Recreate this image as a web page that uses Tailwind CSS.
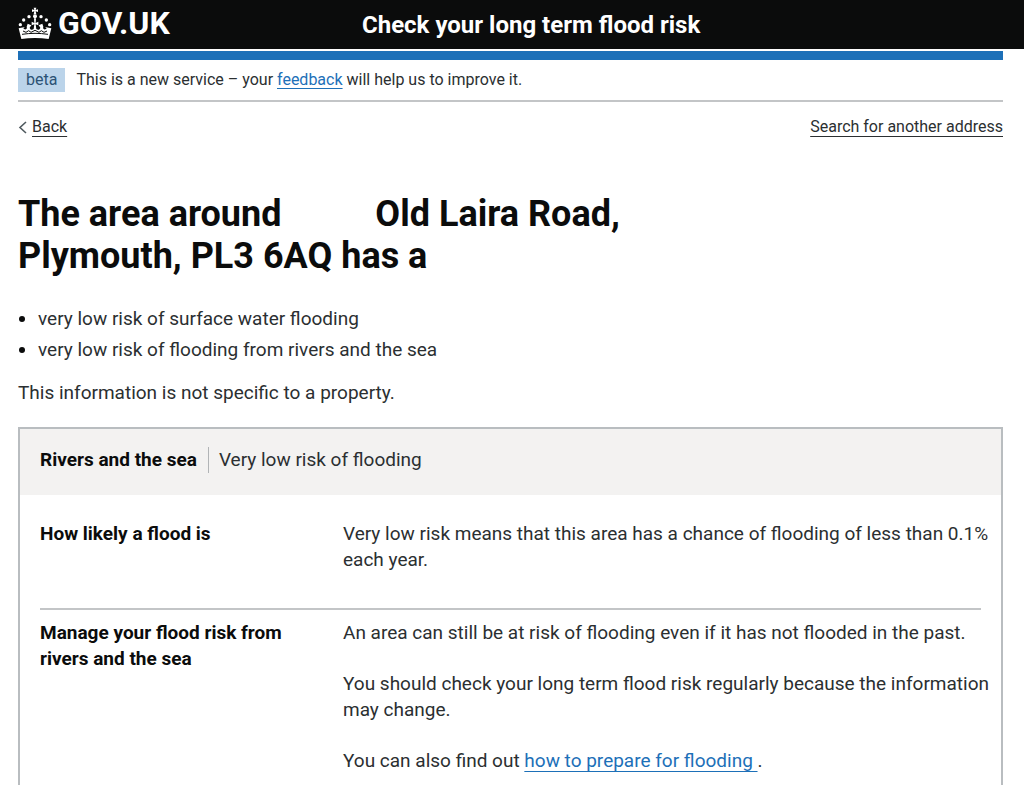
<!DOCTYPE html>
<html lang="en">
<head>
  <meta charset="utf-8">
  <meta name="viewport" content="width=device-width, initial-scale=1">
  <title>Check your long term flood risk - GOV.UK</title>
  <script src="https://cdn.jsdelivr.net/npm/@tailwindcss/browser@4"></script>
</head>
<body class="bg-white font-[Roboto,'Liberation_Sans',sans-serif] text-[19px] leading-[26px] text-[#2b2f31]">
  <header class="bg-[#0b0c0c] text-white h-[49px] px-[18px] flex items-center">
    <div class="w-[344px] shrink-0">
      <a href="#" class="inline-flex items-center gap-[6px] text-[32px] leading-[40px] font-bold" aria-label="GOV.UK">
        <svg class="w-[34px] h-[32px]" viewBox="54 16 102 96" fill="currentColor" aria-hidden="true">
          <path d="M101 18h8l-2 7 7-2v8l-7-2 2 9h-8l2-9-7 2v-8l7 2z"/>
          <circle cx="105" cy="44" r="6"/>
          <circle cx="87" cy="45" r="5"/>
          <circle cx="123" cy="45" r="5"/>
          <circle cx="71" cy="55" r="5"/>
          <circle cx="139" cy="55" r="5"/>
          <circle cx="61" cy="69" r="5"/>
          <circle cx="149" cy="69" r="5"/>
          <path d="M102 50h6l-1 14 8-4v11l-8-3 2 14c5 4 11 2 12-4l-5-7 11-5 3 9c-3 8 6 11 10 5l-5-4 19 4-8 32c-26-4-56-4-82 0l-8-32 19-4-5 4c4 6 13 3 10-5l3-9 11 5-5 7c1 6 7 8 12 4l2-14-8 3V60l8 4z"/>
          <path d="M66 98c26-4 52-4 78 0M69 88l9 4 8-5 7 5 12-6 12 6 7-5 8 5 9-4" fill="none" stroke="#0b0c0c" stroke-width="3"/>
        </svg>
        GOV.UK
      </a>
    </div>
    <a href="#" class="text-[24px] leading-[30px] font-bold">Check your long term flood risk</a>
  </header>

  <div class="mx-[18px] pt-[2px] mr-[21px]">
    <div class="h-[9px] bg-[#1d70b8]"></div>

    <div class="flex items-center gap-[11px] py-2 border-b-2 border-[#c3c5c7] text-[16px] leading-6">
      <strong class="bg-[#bbd4ea] text-[#2b5275] font-normal px-2">beta</strong>
      <p>This is a new service – your <a href="#" class="text-[#1d70b8] underline underline-offset-3">feedback</a> will help us to improve it.</p>
    </div>

    <nav class="flex justify-between mt-[13px] text-[16px] leading-6">
      <a href="#" class="flex items-center gap-[5px]">
        <svg class="w-[9px] h-[13px]" viewBox="0 0 9 13" fill="none" stroke="#505a5f" stroke-width="1.6" aria-hidden="true"><path d="M8 1 2 6.500 8 12"/></svg>
        <span class="underline underline-offset-4">Back</span>
      </a>
      <a href="#" class="underline underline-offset-4">Search for another address</a>
    </nav>

    <main class="mt-[54px]">
      <h1 class="text-[36px] leading-[42px] font-bold text-[#0b0c0c]">The area around <span class="inline-block w-[76px]"></span> Old Laira Road,<br>Plymouth, PL3 6AQ has a</h1>

      <ul class="list-disc pl-5 mt-[29px] space-y-[5px] marker:text-[#0b0c0c]">
        <li>very low risk of surface water flooding</li>
        <li>very low risk of flooding from rivers and the sea</li>
      </ul>
      <p class="mt-[17px]">This information is not specific to a property.</p>

      <section class="mt-[21px] border-2 border-[#b9bdc0]">
        <div class="bg-[#f3f2f1] flex items-center px-5 pt-[18px] pb-[22px]">
          <h2 class="font-bold text-[#0b0c0c] pr-[11px] border-r border-[#b1b4b6]">Rivers and the sea</h2>
          <p class="pl-[10px]">Very low risk of flooding</p>
        </div>
        <dl class="px-5 pt-[26px]">
          <div class="flex pb-[35px] border-b-2 border-[#c3c5c7]">
            <dt class="w-[303px] shrink-0 pr-10 font-bold text-[#0b0c0c]">How likely a flood is</dt>
            <dd class="-mr-5">Very low risk means that this area has a chance of flooding of less than 0.1% each year.</dd>
          </div>
          <div class="flex pt-[10px] pb-[35px]">
            <dt class="w-[303px] shrink-0 pr-10 font-bold text-[#0b0c0c]">Manage your flood risk from rivers and the sea</dt>
            <dd class="-mr-5 space-y-[25px]">
              <p>An area can still be at risk of flooding even if it has not flooded in the past.</p>
              <p>You should check your long term flood risk regularly because the information may change.</p>
              <p>You can also find out <a href="#" class="text-[#1d70b8] underline underline-offset-4">how to prepare for flooding </a>.</p>
            </dd>
          </div>
        </dl>
      </section>
    </main>
  </div>
</body>
</html>
